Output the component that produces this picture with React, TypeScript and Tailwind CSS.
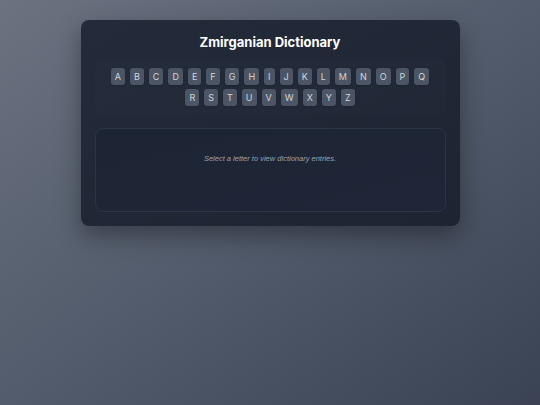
import { useState } from "react";

const LETTERS = "ABCDEFGHIJKLMNOPQRSTUVWXYZ".split("");

export default function App() {
  const [selected, setSelected] = useState<string | null>(null);

  return (
    <div
      className="min-h-screen w-full bg-gradient-to-br from-[#6b7280] via-[#535c6c] to-[#3a4253] pt-5 flex justify-center"
      style={{ fontFamily: "Inter, 'Liberation Sans', sans-serif" }}
    >
      <div className="self-start w-[379px] rounded-lg bg-gradient-to-br from-[#232a39] to-[#1e2432] px-3.5 pt-3.5 pb-3.5 shadow-[0_10px_25px_rgba(0,0,0,0.35)]">
        <h1 className="text-center text-[13px] leading-4 font-bold text-white">
          Zmirganian Dictionary
        </h1>

        <div className="mt-2.5 rounded-md bg-white/[0.012] pt-2 pb-[9px] flex flex-wrap justify-center gap-x-[5px] gap-y-1 px-3">
          {LETTERS.map((letter) => (
            <button
              key={letter}
              type="button"
              onClick={() => setSelected(letter)}
              className={`h-[17px] min-w-[10px] px-1 rounded-[3px] text-[9px] font-normal flex items-center justify-center shadow-sm ${
                selected === letter
                  ? "bg-[#6b7280] text-white"
                  : "bg-[#4b5565] text-gray-300"
              }`}
            >
              {letter}
            </button>
          ))}
        </div>

        <div className="mt-[13px] h-[84px] rounded-lg border border-[#2c3545] bg-gradient-to-br from-[#1d2434] to-[#1f2637] pt-[24px]">
          <p
            className="text-center text-[7.5px] italic text-[#9ca3af]"
            style={{ fontFamily: "'Liberation Sans', Arial, sans-serif" }}
          >
            {selected
              ? `No entries found for "${selected}".`
              : "Select a letter to view dictionary entries."}
          </p>
        </div>
      </div>
    </div>
  );
}
